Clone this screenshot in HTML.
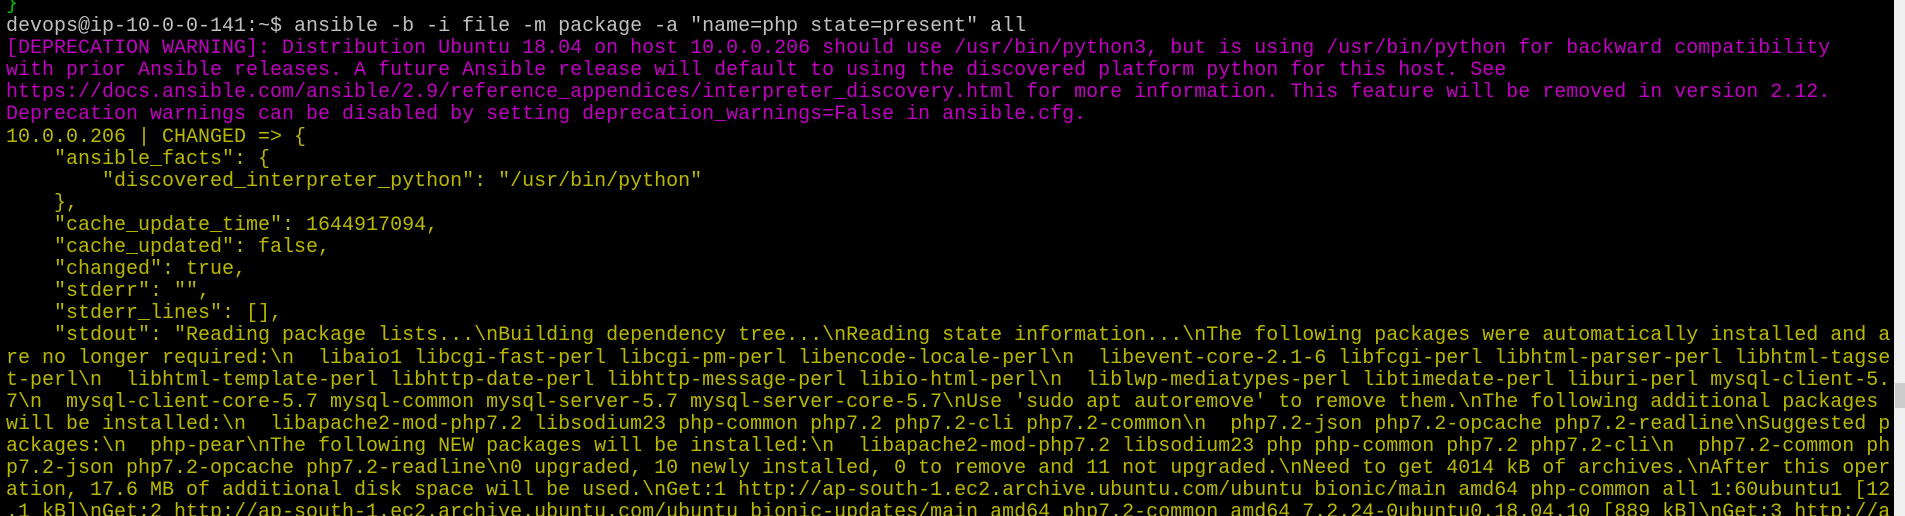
<!DOCTYPE html>
<html><head><meta charset="utf-8"><style>
html,body{margin:0;padding:0;width:1905px;height:516px;overflow:hidden;background:#000;}
#t{position:absolute;left:0;top:0;width:1894px;height:516px;background:#000;overflow:hidden;}
pre{position:absolute;left:6px;top:-6px;margin:0;font-family:"Liberation Mono",monospace;font-size:20px;line-height:22.1px;color:#c0c0c0;white-space:pre;}
.m{color:#c000c0}.y{color:#b8b800}.g{color:#00c000}
#sb{position:absolute;left:1894px;top:0;width:11px;height:516px;background:#f0f0f0;}
#th{position:absolute;left:1895px;top:383px;width:10px;height:25px;background:#cdcdcd;}
</style></head><body>
<div id="t"><pre><span class="g">}</span>
devops@ip-10-0-0-141:~$ ansible -b -i file -m package -a "name=php state=present" all
<span class="m">[DEPRECATION WARNING]: Distribution Ubuntu 18.04 on host 10.0.0.206 should use /usr/bin/python3, but is using /usr/bin/python for backward compatibility
with prior Ansible releases. A future Ansible release will default to using the discovered platform python for this host. See
https://docs.ansible.com/ansible/2.9/reference_appendices/interpreter_discovery.html for more information. This feature will be removed in version 2.12.
Deprecation warnings can be disabled by setting deprecation_warnings=False in ansible.cfg.</span>
<span class="y">10.0.0.206 | CHANGED =&gt; {
    "ansible_facts": {
        "discovered_interpreter_python": "/usr/bin/python"
    },
    "cache_update_time": 1644917094,
    "cache_updated": false,
    "changed": true,
    "stderr": "",
    "stderr_lines": [],
    "stdout": "Reading package lists...\nBuilding dependency tree...\nReading state information...\nThe following packages were automatically installed and a
re no longer required:\n  libaio1 libcgi-fast-perl libcgi-pm-perl libencode-locale-perl\n  libevent-core-2.1-6 libfcgi-perl libhtml-parser-perl libhtml-tagse
t-perl\n  libhtml-template-perl libhttp-date-perl libhttp-message-perl libio-html-perl\n  liblwp-mediatypes-perl libtimedate-perl liburi-perl mysql-client-5.
7\n  mysql-client-core-5.7 mysql-common mysql-server-5.7 mysql-server-core-5.7\nUse 'sudo apt autoremove' to remove them.\nThe following additional packages
will be installed:\n  libapache2-mod-php7.2 libsodium23 php-common php7.2 php7.2-cli php7.2-common\n  php7.2-json php7.2-opcache php7.2-readline\nSuggested p
ackages:\n  php-pear\nThe following NEW packages will be installed:\n  libapache2-mod-php7.2 libsodium23 php php-common php7.2 php7.2-cli\n  php7.2-common ph
p7.2-json php7.2-opcache php7.2-readline\n0 upgraded, 10 newly installed, 0 to remove and 11 not upgraded.\nNeed to get 4014 kB of archives.\nAfter this oper
ation, 17.6 MB of additional disk space will be used.\nGet:1 http://ap-south-1.ec2.archive.ubuntu.com/ubuntu bionic/main amd64 php-common all 1:60ubuntu1 [12
.1 kB]\nGet:2 http://ap-south-1.ec2.archive.ubuntu.com/ubuntu bionic-updates/main amd64 php7.2-common amd64 7.2.24-0ubuntu0.18.04.10 [889 kB]\nGet:3 http://a</span></pre></div>
<div id="sb"></div><div id="th"></div>
</body></html>
